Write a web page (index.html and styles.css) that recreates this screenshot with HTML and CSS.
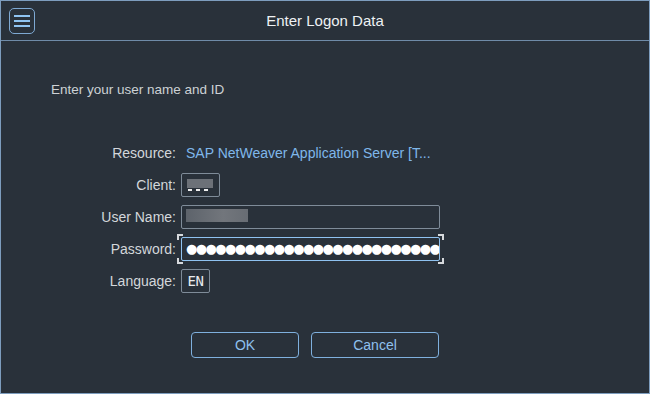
FILE: index.html
```html
<!DOCTYPE html>
<html>
<head>
<meta charset="utf-8">
<link rel="stylesheet" href="styles.css">
</head>
<body>
<div class="dialog">
  <div class="header">
    <div class="menu-btn">
      <svg width="16" height="12" viewBox="0 0 16 12"><rect x="0" y="0" width="16" height="2" fill="#8fc4f2"/><rect x="0" y="5" width="16" height="2" fill="#8fc4f2"/><rect x="0" y="10" width="16" height="2" fill="#8fc4f2"/></svg>
    </div>
    <div class="title">Enter Logon Data</div>
    <div></div>
  </div>
  <div class="content">
    <p class="intro">Enter your user name and ID</p>
    <div class="form">
      <div class="label">Resource:</div>
      <div class="value link">SAP NetWeaver Application Server [T...</div>

      <div class="label">Client:</div>
      <div class="value"><div class="field client"><span class="blur-c"></span><span class="dashes"></span></div></div>

      <div class="label">User Name:</div>
      <div class="value"><div class="field wide"><span class="blur-u"></span></div></div>

      <div class="label">Password:</div>
      <div class="value"><div class="focus"><div class="field wide pw">●●●●●●●●●●●●●●●●●●●●●●●●●●</div></div></div>

      <div class="label">Language:</div>
      <div class="value"><div class="field lang">EN</div></div>
    </div>
    <div class="buttons">
      <div class="btn ok">OK</div>
      <div class="btn cancel">Cancel</div>
    </div>
  </div>
</div>
</body>
</html>
```
FILE: styles.css
```css
html, body { margin: 0; padding: 0; background: #29313a; }
.dialog {
  width: 650px; height: 394px; box-sizing: border-box;
  border: 1px solid #7d9dbe; background: #29313a;
  font-family: "Liberation Sans", Arial, sans-serif;
  color: #d3d7db;
}
.header {
  height: 39px; border-bottom: 1px solid #6f8ba8;
  display: grid; grid-template-columns: 1fr auto 1fr; align-items: center;
}
.menu-btn {
  width: 24px; height: 24px; margin-left: 8px;
  border: 1px solid #7ea9d3; border-radius: 5px;
  display: flex; align-items: center; justify-content: center;
}
.title { font-size: 15px; color: #eef1f4; }
.content { padding-top: 40px; }
.intro { margin: 0 0 0 50px; font-size: 13.5px; line-height: 17px; color: #cdd1d5; }
.form {
  display: grid; grid-template-columns: 175px 1fr; column-gap: 5px; row-gap: 8px;
  margin-top: 43px; align-items: center;
}
.label { text-align: right; font-size: 14px; line-height: 24px; color: #d3d7db; }
.value { height: 24px; display: flex; align-items: center; }
.link { color: #7fb7ea; font-size: 14px; padding-left: 5px; }
.field {
  box-sizing: border-box; height: 24px; border: 1px solid #7f8c99; border-radius: 2px;
  position: relative; overflow: hidden;
}
.client { width: 39px; }
.wide { width: 259px; }
.lang { width: 29px; font-family: "DejaVu Sans Mono", monospace; font-size: 14px; color: #e8ebee;
  letter-spacing: -0.5px; display: flex; align-items: center; justify-content: center; }
.blur-c { position: absolute; left: 5px; top: 5px; width: 26px; height: 9px; background: #6c7178; }
.dashes { position: absolute; left: 6px; top: 15px; width: 21px; height: 2px;
  background: repeating-linear-gradient(90deg, #eeeeee 0 4px, transparent 4px 8px); }
.blur-u { position: absolute; left: 4px; top: 3px; width: 62px; height: 13px;
  background: linear-gradient(90deg, #5d636b, #72767c 60%, #686d74); }
.pw { border-color: #8fc2f0; color: #ffffff; font-size: 13px; line-height: 22px; padding-left: 4px;
  white-space: nowrap; letter-spacing: -1.6px; font-family: "DejaVu Sans", sans-serif; }
.focus { position: relative; }
.focus::before {
  content: ""; position: absolute; left: -4px; right: -4px; top: -3px; bottom: -3px;
  pointer-events: none;
  background:
    linear-gradient(#d6d9dc, #d6d9dc) left top / 6px 2px no-repeat,
    linear-gradient(#d6d9dc, #d6d9dc) left top / 2px 6px no-repeat,
    linear-gradient(#d6d9dc, #d6d9dc) right top / 6px 2px no-repeat,
    linear-gradient(#d6d9dc, #d6d9dc) right top / 2px 6px no-repeat,
    linear-gradient(#d6d9dc, #d6d9dc) left bottom / 6px 2px no-repeat,
    linear-gradient(#d6d9dc, #d6d9dc) left bottom / 2px 6px no-repeat,
    linear-gradient(#d6d9dc, #d6d9dc) right bottom / 6px 2px no-repeat,
    linear-gradient(#d6d9dc, #d6d9dc) right bottom / 2px 6px no-repeat;
}
.buttons { display: flex; gap: 12px; margin-top: 39px; padding-left: 190px; }
.btn {
  box-sizing: border-box; height: 26px; border: 1px solid #7fb0de; border-radius: 4px;
  color: #8fc0ee; font-size: 14px; display: flex; align-items: center; justify-content: center;
}
.ok { width: 108px; }
.cancel { width: 128px; }
```
